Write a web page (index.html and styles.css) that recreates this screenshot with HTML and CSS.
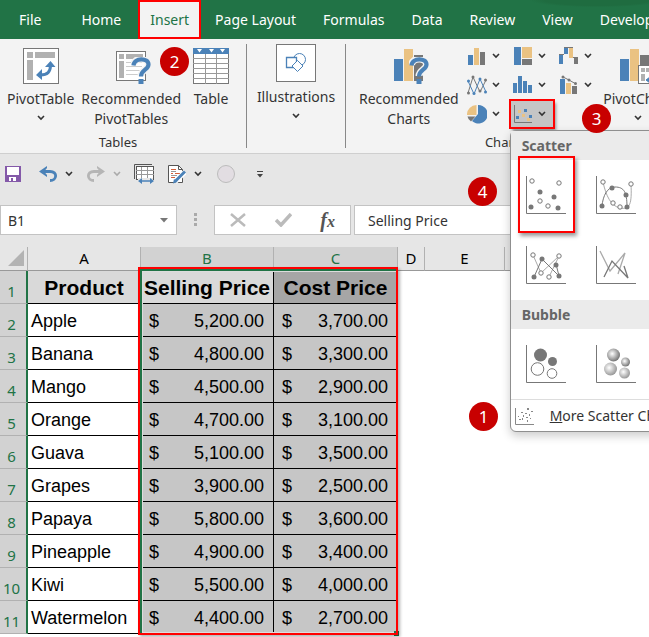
FILE: index.html
```html
<!DOCTYPE html>
<html lang="en">
<head>
    <meta charset="UTF-8">
    <meta name="viewport" content="width=device-width, initial-scale=1.0">
    <title>Insert a scatter chart</title>
    <link rel="stylesheet" href="styles.css">
</head>
<body>
    <svg width="0" height="0" class="defs" aria-hidden="true">
        <defs>
            <symbol id="chevron" viewBox="0 0 8 6"><path d="M1 1l3 3 3-3" fill="none" stroke="currentColor" stroke-width="1.6"/></symbol>
            <symbol id="question" viewBox="0 0 20 28">
                <path d="M2.5 8C3 0 17.500 0 17.500 7.500C17.500 13 10 12.500 10 19" fill="none" stroke="#f3f3f3" stroke-width="7"/>
                <path d="M2.500 8.500C3 .5 17.500 .5 17.500 7.500C17.500 13 10 12.500 10 19.500" fill="none" stroke="#4b82b8" stroke-width="4.200"/>
                <path d="M7.500 22h5v5h-5z" fill="#4b82b8"/>
            </symbol>
            <symbol id="axes" viewBox="0 0 40 38"><path d="M.5 0v37.500H40" fill="none" stroke="#777"/></symbol>
            <radialGradient id="ball" cx="40%" cy="40%" r="60%">
                <stop offset="0" stop-color="#fff"/>
                <stop offset="1" stop-color="#777"/>
            </radialGradient>
            <radialGradient id="ball-light" cx="40%" cy="40%" r="60%">
                <stop offset="0" stop-color="#fff"/>
                <stop offset="1" stop-color="#999"/>
            </radialGradient>
        </defs>
    </svg>

    <nav class="tabs">
        <button class="tab tab-file">File</button>
        <button class="tab">Home</button>
        <button class="tab active">Insert</button>
        <button class="tab">Page Layout</button>
        <button class="tab">Formulas</button>
        <button class="tab">Data</button>
        <button class="tab">Review</button>
        <button class="tab">View</button>
        <button class="tab">Developer</button>
    </nav>

    <div class="ribbon">
        <div class="group group-tables">
            <div class="group-body">
                <button class="big-button">
                    <svg width="36" height="36" viewBox="0 0 36 36">
                        <rect x=".5" y=".5" width="35" height="35" fill="#fff" stroke="#777"/>
                        <path d="M4 4h6v6H4zM12 4h20v6H12zM4 12h6v20H4z" fill="#b1b1b1"/>
                        <path d="M27.500 17c0 7-3 10-10 10" fill="none" stroke="#4b82b8" stroke-width="3"/>
                        <path d="M22 19l5.500-6 5 6zM19 21l-6 6 6 5z" fill="#4b82b8"/>
                    </svg>
                    <span>PivotTable</span>
                    <svg class="chevron" width="8" height="6"><use href="#chevron"/></svg>
                </button>
                <button class="big-button">
                    <svg width="40" height="36" viewBox="-4 0 40 36">
                        <rect x="1.500" y="3.500" width="29" height="29" fill="#fff" stroke="#777"/>
                        <path d="M4 6h5v5H4zM11 6h17v5H11zM4 13h5v17H4z" fill="#b1b1b1"/>
                        <path d="M11 14.500h16M11 18.500h16M11 22.500h16M11 26.500h16" stroke="#ccc"/>
                        <use href="#question" x="16" y="9" width="20" height="28"/>
                    </svg>
                    <span>Recommended</span>
                    <span>PivotTables</span>
                </button>
                <button class="big-button big-table">
                    <svg width="36" height="36" viewBox="0 0 36 36">
                        <rect x=".5" y=".5" width="35" height="35" fill="#fff" stroke="#777"/>
                        <path d="M0 10.500h36M0 15.500h36M0 20.500h36M0 25.500h36M0 30.500h36M12.500 6v30M23.500 6v30" stroke="#999"/>
                        <path d="M0 0h36v6H0z" fill="#4b82b8"/>
                        <path d="M4 1h5L6.500 4.500zM16 1h5l-2.500 3.500zM27 1h5l-2.500 3.500z" fill="#fff"/>
                    </svg>
                    <span>Table</span>
                </button>
            </div>
            <div class="group-name">Tables</div>
        </div>

        <div class="group group-illustrations">
            <button class="big-button">
                <svg width="40" height="38" viewBox="0 0 40 38">
                    <rect x=".5" y=".5" width="39" height="37" fill="#fff" stroke="#777"/>
                    <circle cx="23.500" cy="15.500" r="6" fill="#fff" stroke="#4b82b8"/>
                    <path d="M10.500 13.500h10v10h-10z" fill="#fff" stroke="#4b82b8" stroke-width="1.300"/>
                    <path d="M21.500 16.500l5.500 5.500-5.500 5.500L16 22z" fill="#fff" stroke="#4b82b8"/>
                </svg>
                <span>Illustrations</span>
                <svg class="chevron" width="8" height="6"><use href="#chevron"/></svg>
            </button>
        </div>

        <div class="group group-charts">
            <div class="group-body">
                <button class="big-button">
                    <svg width="40" height="36" viewBox="-4 0 40 36">
                        <path d="M1 11h9v22H1z" fill="#4b82b8"/>
                        <path d="M11 1h9v32h-9z" fill="#eac282"/>
                        <path d="M21 7h9v26h-9z" fill="#777"/>
                        <use href="#question" x="16" y="9" width="20" height="28"/>
                    </svg>
                    <span>Recommended</span>
                    <span>Charts</span>
                </button>
                <div class="chart-grid">
                    <button class="small-button" aria-label="Column chart">
                        <svg width="20" height="20" viewBox="0 0 20 20">
                            <path d="M1 9h5v10H1z" fill="#4b82b8"/><path d="M7 2h5v17H7z" fill="#eac282"/><path d="M13 6h5v13h-5z" fill="#777"/>
                        </svg>
                        <svg class="chevron" width="8" height="6"><use href="#chevron"/></svg>
                    </button>
                    <button class="small-button" aria-label="Hierarchy chart">
                        <svg width="20" height="20" viewBox="0 0 20 20">
                            <path d="M1 1h7v18H1z" fill="#4b82b8"/><path d="M9 1h10v11H9z" fill="#eac282"/><path d="M9 13h10v6H9z" fill="#777"/>
                        </svg>
                        <svg class="chevron" width="8" height="6"><use href="#chevron"/></svg>
                    </button>
                    <button class="small-button" aria-label="Waterfall chart">
                        <svg width="20" height="20" viewBox="0 0 20 20">
                            <path d="M0 8h4v10H0zM5 1h4v7H5z" fill="#4b82b8"/><path d="M10 1h4v11h-4z" fill="#eac282"/><path d="M15 11h4v7h-4z" fill="#777"/>
                            <path d="M14 11.500h5M0 8.500h5M5 1.500h9" stroke="#777"/>
                        </svg>
                        <svg class="chevron" width="8" height="6"><use href="#chevron"/></svg>
                    </button>
                    <button class="small-button" aria-label="Line chart">
                        <svg width="20" height="20" viewBox="0 0 20 20">
                            <path d="M1 18L6 2l7 15 6-12" fill="none" stroke="#777"/>
                            <path d="M1 6l6 13 6-15 6 13" fill="none" stroke="#4b82b8"/>
                            <g fill="#777"><circle cx="1.500" cy="18" r="1.500"/><circle cx="6" cy="2" r="1.500"/><circle cx="13" cy="16" r="1.500"/><circle cx="18.500" cy="5" r="1.500"/></g>
                            <g fill="#4b82b8"><circle cx="1.500" cy="6" r="1.500"/><circle cx="7" cy="18.500" r="1.500"/><circle cx="13" cy="4" r="1.500"/><circle cx="18.500" cy="17" r="1.500"/></g>
                        </svg>
                        <svg class="chevron" width="8" height="6"><use href="#chevron"/></svg>
                    </button>
                    <button class="small-button" aria-label="Statistic chart">
                        <svg width="20" height="20" viewBox="0 0 20 20">
                            <path d="M0 8h4v10H0zM5 1h4v17H5zM10 6h4v12h-4zM15 10h4v8h-4z" fill="#4b82b8"/>
                        </svg>
                        <svg class="chevron" width="8" height="6"><use href="#chevron"/></svg>
                    </button>
                    <button class="small-button" aria-label="Combo chart">
                        <svg width="20" height="20" viewBox="0 0 20 20">
                            <path d="M1 4h5v15H1z" fill="#4b82b8"/><path d="M7 8h5v11H7z" fill="#eac282"/><path d="M13 11h5v8h-5z" fill="#777"/>
                            <path d="M4 2l6 3 7 4" fill="none" stroke="#777"/>
                            <g fill="#777"><circle cx="4" cy="2" r="1.500"/><circle cx="10" cy="5" r="1.500"/><circle cx="16.500" cy="8.500" r="1.500"/></g>
                        </svg>
                        <svg class="chevron" width="8" height="6"><use href="#chevron"/></svg>
                    </button>
                    <button class="small-button" aria-label="Pie chart">
                        <svg width="20" height="20" viewBox="0 0 20 20">
                            <path d="M11 1a9.300 9.300 0 1 1-6 16l6-7z" fill="#4b82b8"/>
                            <path d="M9.500 1v10H0A9.500 9.500 0 0 1 9.500 1z" fill="#eac282"/>
                            <path d="M.5 12.500h8L4 17.500q-3-2-3.500-5z" fill="#777"/>
                        </svg>
                        <svg class="chevron" width="8" height="6"><use href="#chevron"/></svg>
                    </button>
                    <div class="scatter">
                        <button class="small-button pressed" aria-label="Scatter chart" aria-expanded="true">
                            <svg width="20" height="20" viewBox="0 0 20 20">
                                <path d="M1.500 1v17.500H19" fill="none" stroke="#777"/>
                                <path d="M3 12h3v3H3zM11 5h3v3h-3zM16 11h3v3h-3z" fill="#4b82b8"/>
                                <path d="M5 6h3v3H5zM9 10h3v3H9zM14 14h3v3h-3z" fill="#eac282"/>
                            </svg>
                            <svg class="chevron" width="8" height="6"><use href="#chevron"/></svg>
                        </button>

                        <div class="menu">
                            <h2>Scatter</h2>
                            <div class="menu-options">
                                <button class="option highlighted" aria-label="Scatter">
                                    <svg width="40" height="38" viewBox="0 0 40 38">
                                        <use href="#axes"/>
                                        <g fill="#777"><circle cx="14" cy="16" r="2.500"/><circle cx="28" cy="21" r="2.500"/><circle cx="5" cy="31" r="2.500"/><circle cx="32" cy="32" r="2.500"/></g>
                                        <g fill="#fff" stroke="#777"><circle cx="6" cy="5" r="2.200"/><circle cx="33" cy="7" r="2.200"/><circle cx="14" cy="25" r="2.200"/><circle cx="22" cy="30" r="2.200"/></g>
                                    </svg>
                                </button>
                                <button class="option" aria-label="Scatter with smooth lines and markers">
                                    <svg width="40" height="38" viewBox="0 0 40 38">
                                        <use href="#axes"/>
                                        <path d="M7 6c3 14 8 24 17 26 10 2 12-4 11-24" fill="none" stroke="#aaa"/>
                                        <path d="M6 30c1-10 5-19 13-19 9 0 12 5 12 20" fill="none" stroke="#777"/>
                                        <g fill="#777"><circle cx="16" cy="12" r="2.500"/><circle cx="30" cy="19" r="2.500"/><circle cx="6" cy="30" r="2.500"/><circle cx="31" cy="31" r="2.500"/></g>
                                        <g fill="#fff" stroke="#777"><circle cx="7" cy="6" r="2.200"/><circle cx="35" cy="8" r="2.200"/><circle cx="17" cy="27" r="2.200"/><circle cx="24" cy="31" r="2.200"/></g>
                                    </svg>
                                </button>
                                <button class="option" aria-label="Scatter with straight lines and markers">
                                    <svg width="40" height="38" viewBox="0 0 40 38">
                                        <use href="#axes"/>
                                        <path d="M7 9l8 18L33 10 23 31" fill="none" stroke="#aaa"/>
                                        <path d="M8 31l8-18 17 17-3-12" fill="none" stroke="#777"/>
                                        <g fill="#777"><circle cx="16" cy="13" r="2.500"/><circle cx="30" cy="19" r="2.500"/><circle cx="8" cy="31" r="2.500"/><circle cx="33" cy="30" r="2.500"/></g>
                                        <g fill="#fff" stroke="#777"><circle cx="7" cy="9" r="2.200"/><circle cx="33" cy="10" r="2.200"/><circle cx="15" cy="27" r="2.200"/><circle cx="23" cy="31" r="2.200"/></g>
                                    </svg>
                                </button>
                                <button class="option" aria-label="Scatter with straight lines">
                                    <svg width="40" height="38" viewBox="0 0 40 38">
                                        <use href="#axes"/>
                                        <path d="M4 5l10 20L29 7l-7 21" fill="none" stroke="#aaa" stroke-width="1.300"/>
                                        <path d="M8 31l8-16 16 17-4-12" fill="none" stroke="#777" stroke-width="1.300"/>
                                    </svg>
                                </button>
                            </div>
                            <h2>Bubble</h2>
                            <div class="menu-options">
                                <button class="option" aria-label="Bubble">
                                    <svg width="40" height="38" viewBox="0 0 40 38">
                                        <use href="#axes"/>
                                        <circle cx="14.500" cy="10" r="6.500" fill="#777"/><circle cx="26.500" cy="16.500" r="4.500" fill="#777"/>
                                        <g fill="#fff" stroke="#777"><circle cx="11.500" cy="24" r="6.300"/><circle cx="26" cy="28.500" r="4.800"/></g>
                                    </svg>
                                </button>
                                <button class="option" aria-label="3-D bubble">
                                    <svg width="40" height="38" viewBox="0 0 40 38">
                                        <use href="#axes"/>
                                        <circle cx="17.500" cy="10" r="6.500" fill="url(#ball)"/><circle cx="29.500" cy="17" r="4.500" fill="url(#ball)"/>
                                        <circle cx="14.500" cy="24" r="6.500" fill="url(#ball-light)"/><circle cx="28.500" cy="28" r="5.500" fill="url(#ball-light)"/>
                                    </svg>
                                </button>
                            </div>
                            <button class="more">
                                <svg width="20" height="18" viewBox="0 0 20 18">
                                    <path d="M.5 1v16.500H19" fill="none" stroke="#888"/>
                                    <path d="M3 9h1v1H3zM6 5h2v1H6zM8 8h1v2H8zM12 1h2v2h-2zM10 6h2v1h-2zM14 7h1v2h-1zM16 4h2v1h-2zM4 12h2v1H4zM7 11h1v2H7zM11 10h2v1h-2zM12 13h1v2h-1zM15 11h1v1h-1z" fill="#888"/>
                                </svg>
                                <span><u>M</u>ore Scatter Charts...</span>
                            </button>
                        </div>
                    </div>
                </div>
                <button class="big-button big-pivot">
                    <svg width="36" height="36" viewBox="0 0 36 36">
                        <path d="M0 11h9v22H0z" fill="#4b82b8"/>
                        <path d="M10 1h9v32h-9z" fill="#eac282"/>
                        <path d="M20 7h9v10h-9z" fill="#777"/>
                        <rect x="18.500" y="17.500" width="18" height="18" fill="#fff" stroke="#777"/>
                        <path d="M21 20h4v4h-4zM26 20h8v4h-8zM21 26h4v7h-4z" fill="#b1b1b1"/>
                        <path d="M26 32l4-3v6zM30 32h4v-6" fill="#4b82b8" stroke="#4b82b8"/>
                    </svg>
                    <span>PivotChart</span>
                    <svg class="chevron" width="8" height="6"><use href="#chevron"/></svg>
                </button>
            </div>
            <div class="group-name">Charts</div>
        </div>
    </div>

    <div class="quick-access">
        <button aria-label="Save">
            <svg width="16" height="16" viewBox="0 0 16 16">
                <path d="M0 0h16v16H0z" fill="#8459a9"/><path d="M2 1h12v8H2zM4 11h7v4H4z" fill="#fff"/><path d="M6 12h2v3H6z" fill="#8459a9"/>
            </svg>
        </button>
        <button class="undo" aria-label="Undo">
            <svg width="19" height="16" viewBox="0 0 19 16">
                <path d="M3 5.500h8c8 0 7 9 0 9" fill="none" stroke="#4b82b8" stroke-width="2.800"/><path d="M8 0v2L5 5.500 8 9v2L0 5.500z" fill="#4b82b8"/>
            </svg>
            <svg class="chevron" width="8" height="6"><use href="#chevron"/></svg>
        </button>
        <button class="redo" aria-label="Redo" disabled>
            <svg width="19" height="16" viewBox="0 0 19 16">
                <path d="M16 5.500H8c-8 0-7 9 0 9" fill="none" stroke="#b5b5b5" stroke-width="2.800"/><path d="M11 0v2l3 3.500L11 9v2l8-5.500z" fill="#b5b5b5"/>
            </svg>
            <svg class="chevron" width="8" height="6"><use href="#chevron"/></svg>
        </button>
        <button aria-label="Column width">
            <svg width="21" height="20" viewBox="0 0 21 20">
                <path d="M.5 15V.5H18" fill="none" stroke="#555"/>
                <rect x="2.500" y="2.500" width="17" height="13" fill="#fff" stroke="#555"/>
                <path d="M2 6.500h18M2 10.500h18M7.500 3v13M13.500 3v13" stroke="#999"/>
                <path d="M4 14h15v6H4z" fill="#e6e6e6"/>
                <path d="M6 17h12" stroke="#4b82b8" stroke-width="1.500"/><path d="M8 14v6l-4-3zM16 14v6l4-3z" fill="#4b82b8"/>
            </svg>
        </button>
        <button class="edit" aria-label="Edit">
            <svg width="18" height="20" viewBox="0 0 18 20">
                <path d="M.5 1.500h10l4 4v13H.5z" fill="#fff" stroke="#555"/><path d="M10.500 1.500v4h4" fill="none" stroke="#555"/>
                <path d="M3 5.500h5M3 9.500h2M7 9.500h5M3 13.500h4" stroke="#d4603b"/><path d="M3 7.500h5M3 11.500h6" stroke="#999"/>
                <path d="M17 8L7 18" stroke="#fff" stroke-width="5"/><path d="M17 7.500L7.500 17" stroke="#4b82b8" stroke-width="3"/><path d="M6 15l3.500 3L5 19.500z" fill="#4b82b8"/>
            </svg>
            <svg class="chevron" width="8" height="6"><use href="#chevron"/></svg>
        </button>
        <button class="record" aria-label="Record" disabled>
            <svg width="18" height="18" viewBox="0 0 18 18"><circle cx="9" cy="9" r="8.500" fill="#e2dde2" stroke="#bbb"/></svg>
        </button>
        <button class="customize" aria-label="Customize Quick Access Toolbar">
            <svg width="6" height="7" viewBox="0 0 6 7"><path d="M0 .5h6" stroke="#444"/><path d="M0 3h6L3 6.500z" fill="#444"/></svg>
        </button>
    </div>

    <div class="formula-bar">
        <div class="name-box">
            <input type="text" value="B1" aria-label="Name box">
            <svg width="8" height="5" viewBox="0 0 8 5"><path d="M0 0h8L4 4.500z" fill="#777"/></svg>
        </div>
        <svg class="grip" width="3" height="14" viewBox="0 0 3 14"><path d="M0 0h3v3H0zM0 5h3v3H0zM0 10h3v3H0z" fill="#aaa"/></svg>
        <div class="formula-buttons">
            <button aria-label="Cancel" disabled><svg width="16" height="14" viewBox="0 0 16 14"><path d="M1 1l14 12M15 1L1 13" stroke="#bbb" stroke-width="2.500"/></svg></button>
            <button aria-label="Enter" disabled><svg width="17" height="14" viewBox="0 0 17 14"><path d="M1 7l5 5L16 1" fill="none" stroke="#bbb" stroke-width="3.500"/></svg></button>
            <button class="fx" aria-label="Insert function">f<small>x</small></button>
        </div>
        <input class="formula" type="text" value="Selling Price" aria-label="Formula">
    </div>

    <div class="sheet">
        <table>
            <colgroup>
                <col class="col-head"><col class="col-a"><col class="col-b"><col class="col-c"><col class="col-d"><col class="col-e"><col>
            </colgroup>
            <thead>
                <tr>
                    <th class="corner"><svg width="16" height="16" viewBox="0 0 16 16"><path d="M16 0v16H0z" fill="#b3b3b3"/></svg></th>
                    <th>A</th><th class="selected">B</th><th class="selected">C</th><th>D</th><th>E</th><th>F</th>
                </tr>
            </thead>
            <tbody>
                <tr class="titles"><th>1</th><td>Product</td><td>Selling Price</td><td class="dark">Cost Price</td></tr>
                <tr><th>2</th><td>Apple</td><td><div class="money"><span>$</span><span>5,200.00</span></div></td><td><div class="money"><span>$</span><span>3,700.00</span></div></td></tr>
                <tr><th>3</th><td>Banana</td><td><div class="money"><span>$</span><span>4,800.00</span></div></td><td><div class="money"><span>$</span><span>3,300.00</span></div></td></tr>
                <tr><th>4</th><td>Mango</td><td><div class="money"><span>$</span><span>4,500.00</span></div></td><td><div class="money"><span>$</span><span>2,900.00</span></div></td></tr>
                <tr><th>5</th><td>Orange</td><td><div class="money"><span>$</span><span>4,700.00</span></div></td><td><div class="money"><span>$</span><span>3,100.00</span></div></td></tr>
                <tr><th>6</th><td>Guava</td><td><div class="money"><span>$</span><span>5,100.00</span></div></td><td><div class="money"><span>$</span><span>3,500.00</span></div></td></tr>
                <tr><th>7</th><td>Grapes</td><td><div class="money"><span>$</span><span>3,900.00</span></div></td><td><div class="money"><span>$</span><span>2,500.00</span></div></td></tr>
                <tr><th>8</th><td>Papaya</td><td><div class="money"><span>$</span><span>5,800.00</span></div></td><td><div class="money"><span>$</span><span>3,600.00</span></div></td></tr>
                <tr><th>9</th><td>Pineapple</td><td><div class="money"><span>$</span><span>4,900.00</span></div></td><td><div class="money"><span>$</span><span>3,400.00</span></div></td></tr>
                <tr><th>10</th><td>Kiwi</td><td><div class="money"><span>$</span><span>5,500.00</span></div></td><td><div class="money"><span>$</span><span>4,000.00</span></div></td></tr>
                <tr><th>11</th><td>Watermelon</td><td><div class="money"><span>$</span><span>4,400.00</span></div></td><td><div class="money"><span>$</span><span>2,700.00</span></div></td></tr>
            </tbody>
        </table>
        <div class="selection"></div>
        <div class="selection-mark"></div>
    </div>

    <!-- numbered steps -->
    <span class="step step-1">1</span>
    <span class="step step-2">2</span>
    <span class="step step-3">3</span>
    <span class="step step-4">4</span>
</body>
</html>
```

FILE: styles.css
```css
* {
    box-sizing: border-box;
}
body {
    position: relative;
    display: flex;
    flex-direction: column;
    margin: 0;
    height: 100vh;
    overflow: hidden;
    background-color: #e6e6e6;
    color: #333;
    font-family: "Noto Sans", "Open Sans", sans-serif;
    font-size: 15px;
}
button, input {
    font: inherit;
    color: inherit;
    border: none;
    background: none;
    padding: 0;
}
svg {
    display: block;
    flex: none;
}
.defs {
    position: absolute;
}

/* tabs */
.tabs {
    flex: none;
    display: flex;
    height: 39px;
    overflow: hidden;
    background: radial-gradient(ellipse 75px 8px at 92% 0, #1f6c40 70%, transparent 90%), #217346;
}
.tab {
    flex: none;
    padding: 0 14px;
    color: white;
    font-size: 14px;
    white-space: nowrap;
}
.tab-file {
    padding: 0 26px 0 19px;
}
.tab.active {
    margin-left: 3px;
    padding: 0 12px;
    background-color: #f3f3f3;
    color: #217346;
    outline: 2px solid #f00;
    outline-offset: -2px;
}
.tab.active ~ .tab {
    padding: 0 13px 0 14px;
}

/* ribbon */
.ribbon {
    flex: none;
    display: flex;
    height: 115px;
    padding: 5px 0;
    background-color: #f3f3f3;
    border-bottom: 1px solid #cfcfcf;
    font-size: 14px;
    line-height: 20px;
}
.group {
    flex: none;
    display: flex;
    flex-direction: column;
    justify-content: space-between;
    border-right: 1px solid #888;
}
.group-body {
    display: flex;
    height: 88px;
    padding-top: 4px;
}
.group-tables {
    width: 247px;
}
.group-tables .group-body {
    gap: 7px;
    padding-left: 7px;
}
.group-illustrations {
    width: 99px;
    align-items: center;
}
.group-charts .group-body {
    padding-left: 13px;
}
.group-name {
    padding-right: 10px;
    text-align: center;
    font-size: 13px;
    line-height: 12px;
}
.big-button {
    display: flex;
    flex-direction: column;
    align-items: center;
    white-space: nowrap;
}
.big-button span:first-of-type {
    margin-top: 5px;
}
.big-button .chevron {
    margin-top: 6px;
}
.big-table {
    margin-left: 5px;
}
.big-pivot {
    width: 72px;
}
.chevron {
    color: #333;
}
.chart-grid {
    display: grid;
    grid-template-columns: repeat(3, 46px);
    grid-auto-rows: 29px;
    margin-top: -6px;
    margin-left: 5px;
}
.small-button {
    display: flex;
    align-items: center;
    gap: 5px;
    width: 44px;
    height: 28px;
    padding: 0 3px;
}
.scatter {
    position: relative;
}
.pressed {
    background-color: #c5c5c5;
    outline: 2px solid #f00;
    outline-offset: -1px;
    box-shadow: 2px 3px 3px rgba(0,0,0,0.4);
}

/* scatter menu */
.menu {
    position: absolute;
    top: 30px;
    left: 0;
    z-index: 2;
    width: 290px;
    background-color: white;
    border: 1px solid #8f8f8f;
    border-radius: 6px;
    box-shadow: 0 4px 10px rgba(0,0,0,0.2);
}
.menu h2 {
    margin: 0;
    padding-left: 11px;
    background-color: #ebebeb;
    color: #666;
    font-size: 14px;
    line-height: 29px;
}
.menu-options {
    display: grid;
    grid-template-columns: 70px 70px;
}
.option {
    height: 70px;
    padding: 0 15px;
}
.highlighted {
    position: relative;
}
.highlighted::after {
    content: "";
    position: absolute;
    inset: -4px 6px -3px 7px;
    border: 2px solid #f00;
    box-shadow: 2px 3px 4px rgba(0,0,0,0.4);
}
.more {
    display: flex;
    align-items: center;
    gap: 15px;
    width: 100%;
    height: 32px;
    padding-left: 4px;
    border-top: 1px solid #ddd;
}

/* quick access toolbar */
.quick-access {
    flex: none;
    display: flex;
    align-items: center;
    height: 40px;
    padding-left: 5px;
}
.quick-access button {
    display: flex;
    align-items: center;
    margin-right: 13px;
}
.quick-access .undo {
    gap: 7px;
    margin-left: 5px;
}
.quick-access .redo {
    gap: 8px;
}
.redo .chevron {
    color: #aaa;
}
.quick-access .edit {
    gap: 8px;
    margin-right: 15px;
}
.quick-access .customize {
    margin-left: 9px;
}

/* formula bar */
.formula-bar {
    flex: none;
    display: flex;
    height: 30px;
    margin: 11px 0 12px;
}
.name-box, .formula-buttons, .formula {
    background-color: white;
    border: 1px solid #c3c3c3;
}
.name-box {
    display: flex;
    align-items: center;
    width: 177px;
    padding: 0 8px 0 7px;
}
.name-box input {
    flex: 1;
    min-width: 0;
    font-size: 14px;
}
.grip {
    margin: 8px 17px;
}
.formula-buttons {
    display: flex;
    align-items: center;
    justify-content: space-between;
    width: 137px;
    margin-right: 3px;
    padding: 0 15px;
}
.fx {
    font: italic bold 20px "Liberation Serif", serif;
    color: #555;
}
.fx small {
    font-size: 16px;
}
.formula {
    flex: 1;
    min-width: 0;
    padding-left: 13px;
    font-size: 14px;
}

/* sheet */
.sheet {
    position: relative;
    flex: 1;
    background-color: white;
}
table {
    width: 100%;
    table-layout: fixed;
    border-collapse: separate;
    border-spacing: 0;
    color: black;
}
.col-head { width: 28px; }
.col-a { width: 113px; }
.col-b { width: 133px; }
.col-c { width: 124px; }
.col-d { width: 27px; }
.col-e { width: 80px; }
th {
    padding: 0;
    font-weight: normal;
    line-height: 22px;
}
thead th {
    height: 24px;
    padding-bottom: 1px;
    background-color: #e6e6e6;
    border-right: 1px solid #b1b1b1;
    border-bottom: 1px solid #999;
}
thead .selected {
    background-color: #d2d2d2;
    color: #217346;
}
.corner svg {
    margin-left: 8px;
}
tbody th {
    height: 33px;
    padding: 8px 3px 0 0;
    background-color: #d2d2d2;
    border-right: 2px solid #217346;
    border-bottom: 1px solid #b1b1b1;
    color: #217346;
}
td {
    padding: 2px 0 0 3px;
    background-color: #c6c6c6;
    border-right: 1px solid black;
    border-bottom: 1px solid black;
    font: 18px "Liberation Sans", Arial, sans-serif;
    white-space: nowrap;
}
td:nth-child(2) {
    background-color: white;
}
.titles td {
    padding: 1px 0 0;
    background-color: #d9d9d9;
    font-size: 21px;
    font-weight: bold;
    text-align: center;
}
.titles td.dark {
    background-color: #a6a6a6;
}
.money {
    display: flex;
    justify-content: space-between;
    padding: 0 9px 0 5px;
}
.selection {
    position: absolute;
    top: 22px;
    left: 140px;
    width: 258px;
    bottom: 3px;
    border: 2px solid #217346;
    border-width: 2px 1px 1px 2px;
    box-shadow: inset 0 0 0 1px #ddd;
}
.selection::after {
    content: "";
    position: absolute;
    right: -2px;
    bottom: -3px;
    width: 5px;
    height: 5px;
    background-color: #217346;
}
.selection-mark {
    position: absolute;
    top: 20px;
    left: 138px;
    width: 260px;
    bottom: 2px;
    border: 2px solid #f00;
    box-shadow: 2px 2px 3px rgba(0,0,0,0.3);
}

/* step numbers */
.step {
    position: absolute;
    z-index: 3;
    width: 29px;
    height: 29px;
    border-radius: 50%;
    background-color: #c80000;
    color: white;
    font-size: 17px;
    line-height: 29px;
    text-align: center;
}
.step-1 { left: 469px; top: 402px; }
.step-2 { left: 160px; top: 47px; }
.step-3 { left: 582px; top: 104px; }
.step-4 { left: 468px; top: 177px; }
```
